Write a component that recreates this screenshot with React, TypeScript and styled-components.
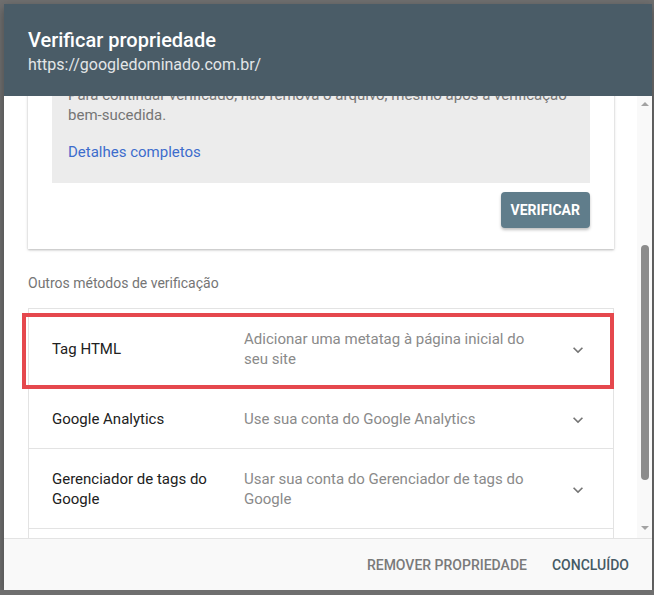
import { useLayoutEffect, useRef } from "react";
import styled, { createGlobalStyle } from "styled-components";

const GlobalStyle = createGlobalStyle`
  html, body {
    margin: 0;
    padding: 0;
  }
  body {
    background: #6f6f6f;
    font-family: Roboto, "Noto Sans", Arial, sans-serif;
    -webkit-font-smoothing: antialiased;
  }
`;

interface Method {
  id: string;
  title: string;
  description: string;
  highlighted?: boolean;
}

const methods: Method[] = [
  { id: "tag", title: "Tag HTML", description: "Adicionar uma metatag à página inicial do seu site", highlighted: true },
  { id: "analytics", title: "Google Analytics", description: "Use sua conta do Google Analytics" },
  { id: "gtm", title: "Gerenciador de tags do Google", description: "Usar sua conta do Gerenciador de tags do Google" },
  { id: "dns", title: "Provedor de nome de domínio", description: "Associar um registro DNS ao Google" },
];

const ExpandIcon = ({ up = false }: { up?: boolean }) => (
  <svg width="20" height="20" viewBox="0 0 24 24" style={{ transform: up ? "rotate(180deg)" : undefined }}>
    <path fill="#757575" d="M16.59 8.59L12 13.17 7.41 8.59 6 10l6 6 6-6z" />
  </svg>
);

const App = () => {
  const scrollerRef = useRef<HTMLDivElement>(null);
  const anchorRef = useRef<HTMLParagraphElement>(null);

  // keep the dialog scrolled to the end of the HTML file instructions
  useLayoutEffect(() => {
    const scroller = scrollerRef.current;
    const anchor = anchorRef.current;
    if (!scroller || !anchor) return;
    const offset = anchor.getBoundingClientRect().top - scroller.getBoundingClientRect().top;
    scroller.scrollTop += offset + 11;
  }, []);

  return (
    <>
      <GlobalStyle />
      <Dialog>
        <Header>
          <Title>Verificar propriedade</Title>
          <Url>https://googledominado.com.br/</Url>
        </Header>

        <Main>
          <Scroller ref={scrollerRef}>
            <SectionLabel>Método de verificação recomendado</SectionLabel>
            <Card>
              <CardHead>
                <div>
                  <MethodTitle>Arquivo HTML</MethodTitle>
                  <MethodDesc>Fazer upload de um arquivo HTML no seu site</MethodDesc>
                </div>
                <ExpandIcon up />
              </CardHead>
              <Step>1. Fazer o download do arquivo:</Step>
              <FileButton>google5f3a8c21b7d94e60.html</FileButton>
              <Step>2. Fazer upload em: https://googledominado.com.br/</Step>
              <InfoBox>
                <InfoText ref={anchorRef}>
                  Para continuar verificado, não remova o arquivo, mesmo após a verificação bem-sucedida.
                </InfoText>
                <Link href="#">Detalhes completos</Link>
              </InfoBox>
              <VerifyButton type="button">Verificar</VerifyButton>
            </Card>

            <SectionLabel>Outros métodos de verificação</SectionLabel>
            <List>
              {methods.map((m) => (
                <Row key={m.id} $highlighted={m.highlighted}>
                  <RowTitle>{m.title}</RowTitle>
                  <RowDesc>{m.description}</RowDesc>
                  <RowIcon>
                    <ExpandIcon />
                  </RowIcon>
                </Row>
              ))}
            </List>
          </Scroller>

          <Track>
            <ArrowUp />
            <Thumb />
            <ArrowDown />
          </Track>
        </Main>

        <Footer>
          <TextButton type="button">Remover propriedade</TextButton>
          <TextButton type="button" $primary>Concluído</TextButton>
        </Footer>
      </Dialog>
    </>
  );
};

export default App;

const Dialog = styled.div`
  width: 648px;
  height: 586px;
  margin: 4px 2px 0 4px;
  display: flex;
  flex-direction: column;
  background: #ffffff;
  box-shadow: 0 4px 10px rgba(0, 0, 0, 0.35);
  overflow: hidden;
`;

const Header = styled.div`
  flex: 0 0 92px;
  box-sizing: border-box;
  padding: 24px 24px 0;
  background: #4a5c67;
  color: #ffffff;
`;

const Title = styled.div`
  font-size: 20px;
  line-height: 24px;
  font-weight: 500;
`;

const Url = styled.div`
  margin-top: 3px;
  font-size: 16px;
  line-height: 20px;
  color: #e3e6e8;
`;

const Main = styled.div`
  flex: 1;
  min-height: 0;
  display: flex;
`;

const Scroller = styled.div`
  position: relative;
  flex: 1;
  overflow: hidden;
  padding: 24px 23px 24px 24px;
`;

const SectionLabel = styled.div`
  font-size: 14px;
  line-height: 20px;
  color: #757575;
  margin: 24px 0 15px;

  &:first-child {
    margin-top: 0;
  }
`;

const Card = styled.div`
  display: flex;
  flex-direction: column;
  padding: 20px 24px 21px;
  background: #ffffff;
  box-shadow: 0 1px 2px rgba(0, 0, 0, 0.22), 0 1px 4px rgba(0, 0, 0, 0.08);
`;

const CardHead = styled.div`
  display: flex;
  justify-content: space-between;
  align-items: center;
  margin-bottom: 16px;
`;

const MethodTitle = styled.div`
  font-size: 16px;
  line-height: 24px;
  color: #212121;
`;

const MethodDesc = styled.div`
  font-size: 15px;
  line-height: 20px;
  color: #757575;
`;

const Step = styled.div`
  font-size: 15px;
  line-height: 20px;
  color: #212121;
  margin: 8px 0;
`;

const FileButton = styled.div`
  align-self: flex-start;
  padding: 8px 12px;
  border: 1px solid #dadce0;
  border-radius: 4px;
  font-size: 14px;
  color: #455a64;
`;

const InfoBox = styled.div`
  margin-top: 16px;
  padding: 16px 16px 21px;
  background: #ececec;
`;

const InfoText = styled.p`
  margin: 0;
  font-size: 15px;
  line-height: 20px;
  color: #757575;
`;

const Link = styled.a`
  display: block;
  margin-top: 17px;
  font-size: 15px;
  line-height: 20px;
  color: #3d6dcc;
  text-decoration: none;
`;

const VerifyButton = styled.button`
  align-self: flex-end;
  margin-top: 9px;
  height: 36px;
  padding: 0 10px;
  border: 0;
  border-radius: 4px;
  background: #607d8b;
  color: #ffffff;
  font-family: inherit;
  font-size: 14px;
  font-weight: 700;
  text-transform: uppercase;
  box-shadow: 0 2px 3px rgba(0, 0, 0, 0.25);
`;

const List = styled.div`
  border: 1px solid #e3e3e3;
`;

const Row = styled.div<{ $highlighted?: boolean }>`
  position: relative;
  display: grid;
  grid-template-columns: 192px 300px 1fr;
  align-items: center;
  padding: 20px 25px 19px 23px;
  border-bottom: 1px solid #e3e3e3;
  font-size: 15px;
  line-height: 20px;

  &:last-child {
    border-bottom: 0;
  }

  ${({ $highlighted }) =>
    $highlighted &&
    `
    &::after {
      content: "";
      position: absolute;
      top: 4px;
      bottom: -1px;
      left: -7px;
      right: -1px;
      border: 4px solid #e5484d;
      pointer-events: none;
    }
  `}
`;

const RowTitle = styled.div`
  color: #212121;
  padding-right: 20px;
`;

const RowDesc = styled.div`
  color: #8a8a8a;
`;

const RowIcon = styled.div`
  display: flex;
  justify-content: flex-end;
  height: 20px;

  & > svg {
    margin-top: 1px;
  }
`;

const Track = styled.div`
  flex: 0 0 15px;
  display: flex;
  flex-direction: column;
  align-items: center;
  background: #f9f9f9;
`;

const ArrowUp = styled.div`
  margin-top: 6px;
  width: 0;
  height: 0;
  border-left: 4px solid transparent;
  border-right: 4px solid transparent;
  border-bottom: 4px solid #a3a3a3;
`;

const Thumb = styled.div`
  margin-top: 139px;
  width: 8px;
  height: 235px;
  border-radius: 4px;
  background: #8c8c8c;
`;

const ArrowDown = styled.div`
  margin-top: auto;
  margin-bottom: 8px;
  width: 0;
  height: 0;
  border-left: 4px solid transparent;
  border-right: 4px solid transparent;
  border-top: 4px solid #a3a3a3;
`;

const Footer = styled.div`
  flex: 0 0 52px;
  box-sizing: border-box;
  display: flex;
  justify-content: flex-end;
  align-items: center;
  gap: 9px;
  padding: 0 15px 0 0;
  background: #f9f9f9;
  border-top: 1px solid #e3e3e3;
`;

const TextButton = styled.button<{ $primary?: boolean }>`
  height: 36px;
  padding: 0 8px;
  border: 0;
  background: transparent;
  font-family: inherit;
  font-size: 14px;
  font-weight: 500;
  text-transform: uppercase;
  color: ${({ $primary }) => ($primary ? "#455a64" : "#7a7a7a")};
`;
